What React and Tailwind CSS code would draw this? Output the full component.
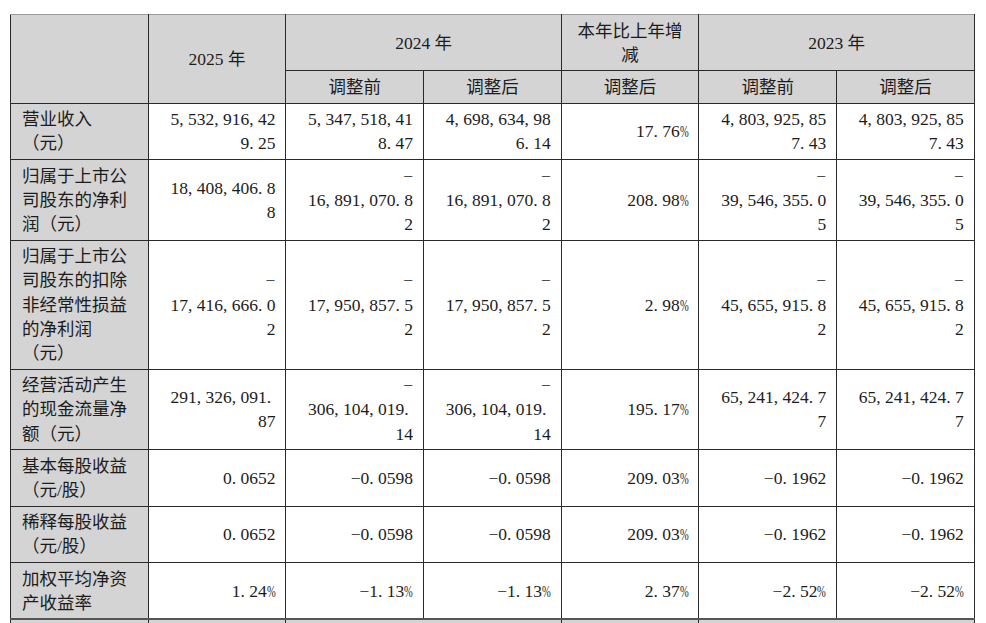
import React from 'react';

// Half-width look for punctuation: Liberation Serif's comma/period are narrow,
// so pad them out and squeeze the percent sign.
function Num({ text }) {
  const lines = text.split('/');
  return (
    <>
      {lines.map((line, i) => (
        <React.Fragment key={i}>
          {i > 0 && <br />}
          {line.split('').map((ch, j) => {
            if (ch === ',' || ch === '.') {
              return (
                <span key={j} className="mr-[0.25em]">
                  {ch}
                </span>
              );
            }
            if (ch === '%') {
              return (
                <span key={j} className="inline-block w-[0.5em] scale-x-60 origin-left">
                  %
                </span>
              );
            }
            return ch;
          })}
        </React.Fragment>
      ))}
    </>
  );
}

const rows = [
  {
    label: ['营业收入', '（元）'],
    values: ['5,532,916,42/9.25', '5,347,518,41/8.47', '4,698,634,98/6.14', '17.76%', '4,803,925,85/7.43', '4,803,925,85/7.43'],
  },
  {
    label: ['归属于上市公', '司股东的净利', '润（元）'],
    values: ['18,408,406.8/8', '−/16,891,070.8/2', '−/16,891,070.8/2', '208.98%', '−/39,546,355.0/5', '−/39,546,355.0/5'],
  },
  {
    label: ['归属于上市公', '司股东的扣除', '非经常性损益', '的净利润', '（元）'],
    values: ['−/17,416,666.0/2', '−/17,950,857.5/2', '−/17,950,857.5/2', '2.98%', '−/45,655,915.8/2', '−/45,655,915.8/2'],
  },
  {
    label: ['经营活动产生', '的现金流量净', '额（元）'],
    values: ['291,326,091./87', '−/306,104,019./14', '−/306,104,019./14', '195.17%', '65,241,424.7/7', '65,241,424.7/7'],
  },
  {
    label: ['基本每股收益', '（元/股）'],
    values: ['0.0652', '−0.0598', '−0.0598', '209.03%', '−0.1962', '−0.1962'],
  },
  {
    label: ['稀释每股收益', '（元/股）'],
    values: ['0.0652', '−0.0598', '−0.0598', '209.03%', '−0.1962', '−0.1962'],
  },
  {
    label: ['加权平均净资', '产收益率'],
    values: ['1.24%', '−1.13%', '−1.13%', '2.37%', '−2.52%', '−2.52%'],
  },
];

const cell = 'border border-[#2a2a2a] px-[10px] py-[3.5px] align-middle';
const head = `${cell} bg-[#d4d4d4] text-center`;

export default function App() {
  return (
    <div className="min-h-screen bg-white pl-[10px] pt-[14px] text-[#1c1c1c]">
      <table
        className="w-[964px] table-fixed border-collapse border-t-[#9a9a9a] text-[17.5px] leading-[24.2px]"
        style={{ fontFamily: '"Liberation Serif", "Noto Sans CJK SC", serif' }}
      >
        <colgroup>
          {[0, 1, 2, 3, 4, 5, 6].map((i) => (
            <col key={i} className="w-[137.7px]" />
          ))}
        </colgroup>
        <thead>
          <tr>
            <th rowSpan={2} className={`${head} border-t-[#9a9a9a]`}></th>
            <th rowSpan={2} className={`${head} font-normal border-t-[#9a9a9a]`}>2025 年</th>
            <th colSpan={2} className={`${head} font-normal border-t-[#9a9a9a]`}>2024 年</th>
            <th className={`${head} font-normal border-t-[#9a9a9a]`}>
              本年比上年增
              <br />减
            </th>
            <th colSpan={2} className={`${head} font-normal border-t-[#9a9a9a]`}>2023 年</th>
          </tr>
          <tr>
            <th className={`${head} font-normal`}>调整前</th>
            <th className={`${head} font-normal`}>调整后</th>
            <th className={`${head} font-normal`}>调整后</th>
            <th className={`${head} font-normal`}>调整前</th>
            <th className={`${head} font-normal`}>调整后</th>
          </tr>
        </thead>
        <tbody>
          {rows.map((row, i) => (
            <tr key={i}>
              <td className={`${cell} bg-[#d4d4d4] pl-[11px] text-left`}>
                {row.label.map((l, k) => (
                  <React.Fragment key={k}>
                    {k > 0 && <br />}
                    {l}
                  </React.Fragment>
                ))}
              </td>
              {row.values.map((v, k) => (
                <td key={k} className={`${cell} text-right`}>
                  <Num text={v} />
                </td>
              ))}
            </tr>
          ))}
          <tr className="bg-[#d4d4d4]">
            <td className={`${cell} border-t-2 border-t-[#555]`}>&nbsp;<br />&nbsp;</td>
            <td className={`${cell} border-t-2 border-t-[#555]`}></td>
            <td colSpan={2} className={`${cell} border-t-2 border-t-[#555]`}></td>
            <td className={`${cell} border-t-2 border-t-[#555]`}></td>
            <td colSpan={2} className={`${cell} border-t-2 border-t-[#555]`}></td>
          </tr>
        </tbody>
      </table>
    </div>
  );
}
